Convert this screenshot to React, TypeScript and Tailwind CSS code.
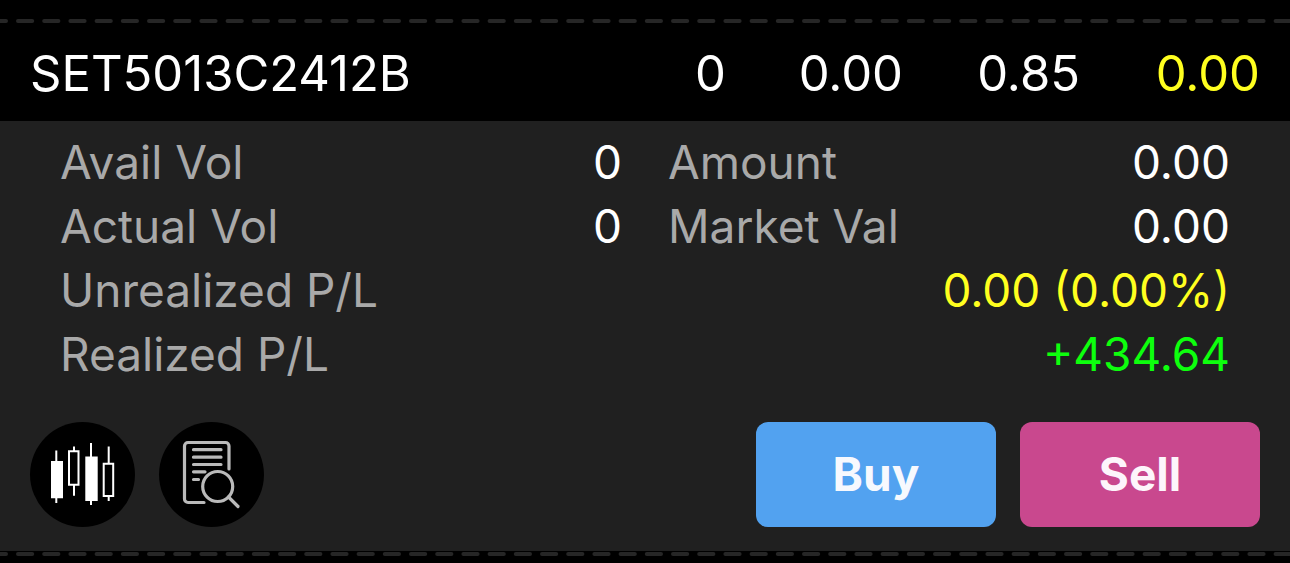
import clsx from "clsx";

type Detail = {
  label: string;
  value: string;
  wide?: boolean;
  color?: string;
};

const position = {
  symbol: "SET5013C2412B",
  volume: "0",
  average: "0.00",
  market: "0.85",
  profit: "0.00",
};

const details: Detail[] = [
  { label: "Avail Vol", value: "0" },
  { label: "Amount", value: "0.00" },
  { label: "Actual Vol", value: "0" },
  { label: "Market Val", value: "0.00" },
  {
    label: "Unrealized P/L",
    value: "0.00 (0.00%)",
    wide: true,
    color: "text-[#ffff1f]",
  },
  {
    label: "Realized P/L",
    value: "+434.64",
    wide: true,
    color: "text-[#0dff0d]",
  },
];

function DashedLine() {
  return (
    <svg className="block h-1.5 w-full" aria-hidden="true">
      <line
        x1="0"
        y1="3"
        x2="100%"
        y2="3"
        stroke="#262626"
        strokeWidth="4"
        strokeLinecap="round"
        strokeDasharray="14.2 12"
        strokeDashoffset="8.2"
      />
    </svg>
  );
}

function CandlesIcon() {
  return (
    <svg viewBox="0 0 105 105" className="size-full" aria-hidden="true">
      <g fill="#fff">
        <path d="M25.3 28.5h2v10.5h5.7v37.3h-5.7v4.7h-2v-4.7h-4.3v-37.3h4.3z" />
        <path d="M60 21h2v13.5h5.7v44.5h-5.7v4h-2v-4h-4.7v-44.5h4.7z" />
      </g>
      <g fill="none" stroke="#fff" strokeWidth="2">
        <path d="M39 29.2h9.5v33.6h-9.5zM44 24.5v4.7M44 62.8v11" />
        <path d="M73.7 41.7h9.5v32.3h-9.5zM78.7 24.5v17.2M78.7 74v5" />
      </g>
    </svg>
  );
}

function ReportSearchIcon() {
  return (
    <svg viewBox="0 0 105 105" className="size-full" aria-hidden="true">
      <g
        fill="none"
        stroke="#bababa"
        strokeWidth="3.2"
        strokeLinecap="round"
        strokeLinejoin="round"
      >
        <path d="M45 80.5H29a3.5 3.5 0 0 1-3.5-3.5V24a3.5 3.5 0 0 1 3.5-3.5h37.5a3.5 3.5 0 0 1 3.5 3.5v23" />
        <path d="M34.5 27.7h27.5M34.5 35.2h27.5M34.5 42.5h27.5M34.5 49.8h11.5M34.5 57.5h5" />
        <circle cx="58.7" cy="64.5" r="15" />
        <path d="M69.5 75l9.5 9.5" />
      </g>
    </svg>
  );
}

export default function App() {
  return (
    <main className="min-h-screen bg-black pt-[18px] font-['Inter',sans-serif] text-white">
      <DashedLine />
      <header className="grid grid-cols-[518fr_178fr_177fr_177fr_180fr] items-center px-[30px] pt-[18px] pb-[15px] text-right text-[49px] leading-[64px]">
        <h1 className="text-left">{position.symbol}</h1>
        <span>{position.volume}</span>
        <span>{position.average}</span>
        <span>{position.market}</span>
        <span className="text-[#ffff1f]">{position.profit}</span>
      </header>
      <section className="bg-[#202020] pt-[9px] pb-6">
        <dl className="grid grid-cols-2 gap-x-[46px] px-[60px] text-[46px] leading-[64px]">
          {details.map((item) => (
            <div
              key={item.label}
              className={clsx("flex justify-between", item.wide && "col-span-2")}
            >
              <dt className="text-[#a9a9a9]">{item.label}</dt>
              <dd className={item.color}>{item.value}</dd>
            </div>
          ))}
        </dl>
        <div className="mt-9 flex items-center gap-6 px-[30px]">
          <button
            type="button"
            aria-label="Chart"
            className="size-[105px] rounded-full bg-black"
          >
            <CandlesIcon />
          </button>
          <button
            type="button"
            aria-label="Details"
            className="size-[105px] rounded-full bg-black"
          >
            <ReportSearchIcon />
          </button>
          <button
            type="button"
            className="ml-auto h-[105px] w-60 rounded-xl bg-[#52a2f0] text-[46px] font-bold text-[#f7f9fe]"
          >
            Buy
          </button>
          <button
            type="button"
            className="h-[105px] w-60 rounded-xl bg-[#c9488e] text-[46px] font-bold text-[#fdf5fb]"
          >
            Sell
          </button>
        </div>
      </section>
      <DashedLine />
    </main>
  );
}
